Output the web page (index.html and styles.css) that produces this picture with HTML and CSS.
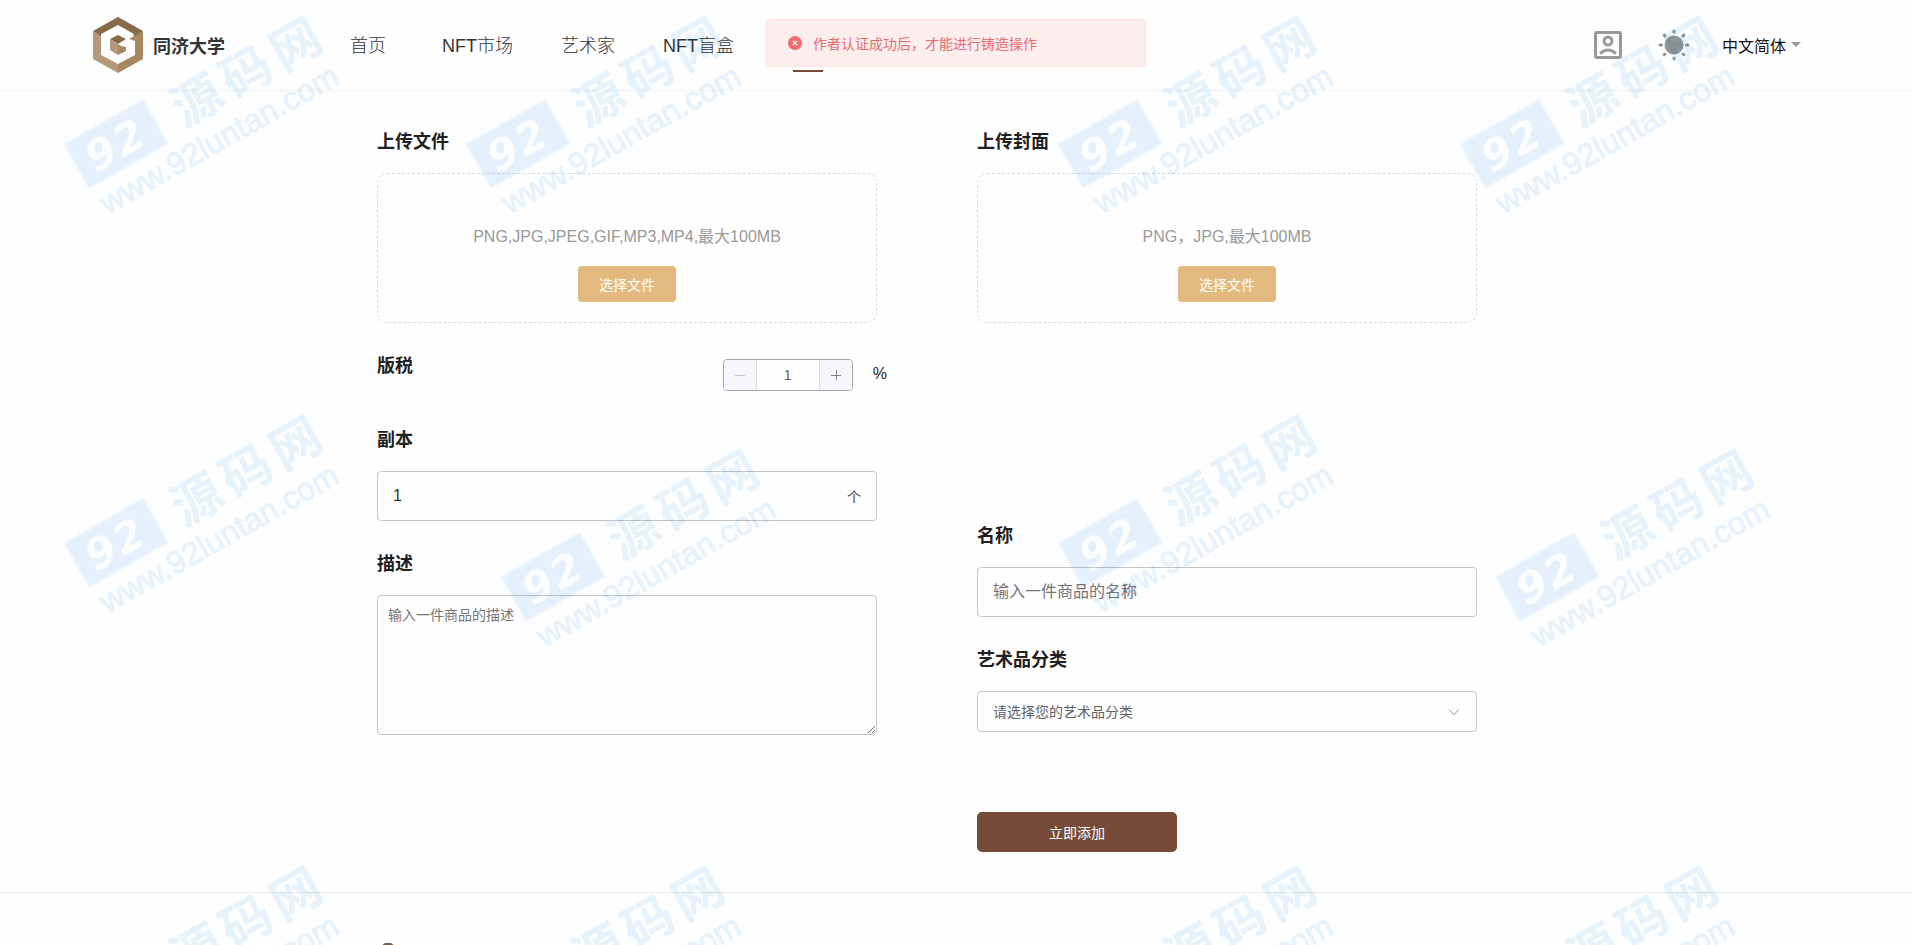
FILE: index.html
```html
<!DOCTYPE html>
<html lang="zh-CN">
<head>
    <meta charset="UTF-8">
    <meta name="viewport" content="width=device-width, initial-scale=1.0">
    <title>同济大学</title>
    <link rel="stylesheet" href="styles.css">
</head>
<body>
    <header class="header">
        <a class="brand" href="#">
            <svg class="brand-logo" viewBox="0 0 50 56" aria-hidden="true">
                <path fill="#b59878" d="M0 14L25 28V56L0 42z"/>
                <path fill="#a68863" d="M50 14L25 28V56L50 42z"/>
                <path fill="#856a4b" d="M25 0L50 14L42 19L25 9L8 19L0 14z"/>
                <path fill="#fff" d="M25 8L41 17L34 21L42 24V38L25 47L8 38V17z"/>
                <path fill="#856a4b" d="M25 18L33 22L25 27L17 22z"/>
                <path fill="#b59878" d="M17 22L25 27V38L17 33z"/>
                <path fill="#a68863" d="M25 27L28 29L33 30V34L25 38z"/>
            </svg>
            <span>同济大学</span>
        </a>
        <nav class="nav">
            <a href="#">首页</a>
            <a href="#">NFT市场</a>
            <a href="#">艺术家</a>
            <a href="#">NFT盲盒</a>
            <a class="active" href="#" aria-label="铸造"></a>
        </nav>
        <div class="tools">
            <button class="icon-btn" type="button" aria-label="个人中心">
                <svg width="28" height="28" viewBox="0 0 28 28" fill="none" stroke="#999" stroke-width="3">
                    <rect x="1.5" y="1.5" width="25" height="25" rx="1.5"/>
                    <circle cx="14" cy="10" r="4"/>
                    <path d="M6 22.500Q14 15.500 22 22.500"/>
                </svg>
            </button>
            <button class="icon-btn" type="button" aria-label="切换主题">
                <svg width="32" height="32" viewBox="0 0 32 32" stroke="#8f959a" stroke-width="3" stroke-linecap="round">
                    <circle cx="16" cy="16" r="9.500" fill="#8f959a" stroke="none"/>
                    <path d="M16 2v1M16 29v1M2 16h1.500M28.500 16h1.500M6.200 6.200l.8.8M25 25l.8.8M6.200 25.800l.8-.8M25 7l.8-.8"/>
                </svg>
            </button>
            <button class="lang" type="button">中文简体<i class="caret"></i></button>
        </div>
    </header>

    <div class="message" role="alert">
        <svg width="14" height="14" viewBox="0 0 14 14" aria-hidden="true">
            <circle cx="7" cy="7" r="7" fill="#f56c6c"/>
            <path d="M4.800 4.800l4.400 4.400M9.200 4.800l-4.400 4.400" stroke="#fff" stroke-width="1.200"/>
        </svg>
        <p>作者认证成功后，才能进行铸造操作</p>
    </div>

    <main class="page">
        <form class="form">
            <div class="col">
                <section class="field">
                    <h2 class="title">上传文件</h2>
                    <div class="upload">
                        <p>PNG,JPG,JPEG,GIF,MP3,MP4,最大100MB</p>
                        <button class="choose" type="button">选择文件</button>
                    </div>
                </section>
                <div class="royalty">
                    <label class="title" for="royalty">版税</label>
                    <div class="stepper">
                        <button type="button" aria-label="减少" disabled>
                            <svg width="12" height="12" viewBox="0 0 12 12"><path d="M1 6.500h10" stroke="#c0c4cc"/></svg>
                        </button>
                        <input id="royalty" type="text" value="1">
                        <button type="button" aria-label="增加">
                            <svg width="12" height="12" viewBox="0 0 12 12"><path d="M1 6.500h10M6.500 1v10" stroke="#7d8087"/></svg>
                        </button>
                    </div>
                    <span>%</span>
                </div>
                <div class="field">
                    <label class="title" for="copies">副本</label>
                    <div class="text-box">
                        <input id="copies" type="text" value="1">
                        <span class="unit">个</span>
                    </div>
                </div>
                <div class="field">
                    <label class="title" for="desc">描述</label>
                    <textarea id="desc" placeholder="输入一件商品的描述"></textarea>
                </div>
            </div>

            <div class="col">
                <section class="field">
                    <h2 class="title">上传封面</h2>
                    <div class="upload">
                        <p>PNG，JPG,最大100MB</p>
                        <button class="choose" type="button">选择文件</button>
                    </div>
                </section>
                <div class="details">
                    <div class="field">
                        <label class="title" for="name">名称</label>
                        <div class="text-box">
                            <input id="name" type="text" placeholder="输入一件商品的名称">
                        </div>
                    </div>
                    <div class="field">
                        <label class="title" for="category">艺术品分类</label>
                        <div class="select-box">
                            <select id="category">
                                <option>请选择您的艺术品分类</option>
                            </select>
                            <svg width="12" height="12" viewBox="0 0 12 12" fill="none" stroke="#8a8d93" aria-hidden="true">
                                <path d="M1 3.500l5 5l5-5"/>
                            </svg>
                        </div>
                    </div>
                    <button class="submit" type="submit">立即添加</button>
                </div>
            </div>
        </form>
    </main>

    <footer class="footer">
        <div class="footer-inner">
            <svg width="22" height="24" viewBox="0 0 22 24" aria-hidden="true">
                <path fill="#765f4b" d="M8 0h6l8 6v12l-11 6l-11-6V6z"/>
            </svg>
        </div>
    </footer>

    <!-- watermark stamps scattered over the page -->
    <svg class="watermark" aria-hidden="true">
        <defs>
            <g id="stamp" transform="rotate(-29.500)">
                <rect class="stamp-edge" width="91" height="51"/>
                <text class="stamp-num" x="13 45" y="41">92</text>
                <text class="stamp-cn" x="112" y="45">源</text>
                <text class="stamp-cn" x="169" y="45">码</text>
                <text class="stamp-cn" x="226" y="45">网</text>
                <text class="stamp-url" x="3" y="83">www.92luntan.com</text>
            </g>
        </defs>
        <use href="#stamp" x="64" y="144"/>
        <use href="#stamp" x="466" y="144"/>
        <use href="#stamp" x="1058" y="144"/>
        <use href="#stamp" x="1460" y="144"/>
        <use href="#stamp" x="64" y="543"/>
        <use href="#stamp" x="501" y="577"/>
        <use href="#stamp" x="1058" y="543"/>
        <use href="#stamp" x="1495" y="577"/>
        <use href="#stamp" x="64" y="994"/>
        <use href="#stamp" x="466" y="994"/>
        <use href="#stamp" x="1058" y="994"/>
        <use href="#stamp" x="1460" y="994"/>
    </svg>
</body>
</html>
```

FILE: styles.css
```css
* {
    box-sizing: border-box;
}

body {
    margin: 0;
    font-family: "Liberation Sans", "Noto Sans CJK SC", sans-serif;
    font-size: 16px;
    color: #1e2022;
    background-color: #fefefe;
    overflow-x: hidden;
}

h2, p {
    margin: 0;
}

a {
    color: inherit;
    text-decoration: none;
}

button, input, select, textarea {
    font-family: inherit;
}

button {
    padding: 0;
    border: none;
    background: none;
    cursor: pointer;
}

/* Header */
.header {
    display: flex;
    align-items: center;
    height: 90px;
    padding: 0 111px 0 93px;
    border-bottom: 1px solid #f7f7f7;
    box-shadow: 0 1px 3px rgba(0, 0, 0, 0.03);
}

.brand {
    display: flex;
    align-items: center;
    gap: 10px;
    font-size: 18px;
    font-weight: bold;
    color: #333;
}

.brand-logo {
    width: 50px;
    height: 56px;
}

.nav {
    display: flex;
    gap: 48px;
    margin-left: 117px;
    font-size: 18px;
    font-weight: 300;
    line-height: 56px;
    color: #333;
}

.nav a {
    min-width: 52px;
    height: 54px;
    text-align: center;
    white-space: nowrap;
}

.nav .active {
    display: flex;
    align-items: flex-end;
    justify-content: center;
}

.nav .active::after {
    content: "";
    width: 30px;
    height: 2px;
    background-color: #764c38;
}

.tools {
    display: flex;
    align-items: center;
    margin-left: auto;
}

.icon-btn {
    display: flex;
    margin-right: 36px;
}

.icon-btn + .icon-btn {
    margin-right: 32px;
}

.lang {
    display: flex;
    align-items: center;
    gap: 5px;
    font-size: 16px;
    color: #111;
}

.caret {
    border: 5px solid transparent;
    border-top-color: #999;
    border-bottom: none;
}

/* Error message over the header */
.message {
    position: fixed;
    top: 19px;
    left: 50%;
    transform: translateX(-50%);
    display: flex;
    align-items: center;
    gap: 11px;
    width: 380px;
    height: 48px;
    padding: 0 21px;
    border: 1px solid #fde2e2;
    border-radius: 4px;
    background-color: #fdeeee;
    font-size: 14px;
    color: #ea6c6f;
}

/* Form */
.page {
    max-width: 1200px;
    margin: 0 auto;
    padding: 38px 79px 40px 21px;
}

.form {
    display: grid;
    grid-template-columns: 1fr 1fr;
    gap: 100px;
}

.col {
    display: flex;
    flex-direction: column;
}

.details {
    margin-top: 199px;
}

.title {
    display: block;
    margin-bottom: 17px;
    font-size: 18px;
    font-weight: bold;
    line-height: 28px;
}

.upload {
    display: flex;
    flex-direction: column;
    align-items: center;
    gap: 17px;
    height: 150px;
    padding-top: 51px;
    border: 1px dashed #dcdcdc;
    border-radius: 10px;
    line-height: 24px;
    color: #999;
}

.choose {
    width: 98px;
    height: 36px;
    border-radius: 4px;
    background-color: #e4b980;
    font-size: 14px;
    color: #fff;
}

.royalty {
    display: flex;
    align-items: flex-start;
    margin: 29px -10px 29px 0;
}

.royalty .title {
    margin-right: auto;
}

.royalty > span {
    margin-left: 20px;
    line-height: 44px;
}

.stepper {
    display: flex;
    width: 130px;
    height: 32px;
    margin-top: 7px;
    border: 1px solid #a6a8ad;
    border-radius: 4px;
    overflow: hidden;
}

.stepper button {
    display: flex;
    align-items: center;
    justify-content: center;
    width: 32px;
    background-color: #f5f7fa;
}

.stepper input {
    flex: 1;
    min-width: 0;
    border: solid #dcdfe6;
    border-width: 0 1px;
    background: none;
    font-size: 14px;
    text-align: center;
    color: #606266;
}

.text-box, .select-box {
    display: flex;
    align-items: center;
    height: 50px;
    padding: 0 15px;
    border: 1px solid #c4c6c9;
    border-radius: 4px;
}

.text-box input {
    flex: 1;
    min-width: 0;
    padding: 0;
    border: none;
    outline: none;
    background: none;
    font-size: 16px;
    color: #333;
}

.unit {
    font-size: 14px;
    color: #444;
}

.field + .field {
    margin-top: 29px;
}

textarea {
    display: block;
    width: 100%;
    height: 140px;
    padding: 8px 10px;
    border: 1px solid #c4c6c9;
    border-radius: 4px;
    background: none;
    font-size: 14px;
}

::placeholder {
    color: #757575;
}

.select-box {
    height: 41px;
    padding-right: 16px;
}

.select-box select {
    flex: 1;
    padding: 0;
    border: none;
    outline: none;
    appearance: none;
    background: none;
    font-size: 14px;
    color: #606266;
}

.submit {
    width: 200px;
    height: 40px;
    margin-top: 80px;
    border-radius: 5px;
    background-color: #764c38;
    font-size: 14px;
    color: #fff;
}

/* Footer */
.footer {
    height: 53px;
    border-top: 1px solid #ebebeb;
    overflow: hidden;
}

.footer-inner {
    max-width: 1200px;
    margin: 0 auto;
    padding: 50px 21px;
}

/* Watermark */
.watermark {
    position: fixed;
    top: 0;
    left: 0;
    width: 100%;
    height: 100%;
    pointer-events: none;
    mix-blend-mode: multiply;
}

.stamp-edge {
    fill: #e5f2fe;
    filter: blur(1px);
}

.stamp-num {
    fill: #fefefe;
    font: italic bold 42px "DejaVu Sans", sans-serif;
}

.stamp-cn {
    fill: #e7f3fd;
    font: bold 50px "Noto Sans CJK SC", sans-serif;
}

.stamp-url {
    fill: #e7f3fd;
    stroke: #e7f3fd;
    font: 32px "Liberation Sans", sans-serif;
}
```
